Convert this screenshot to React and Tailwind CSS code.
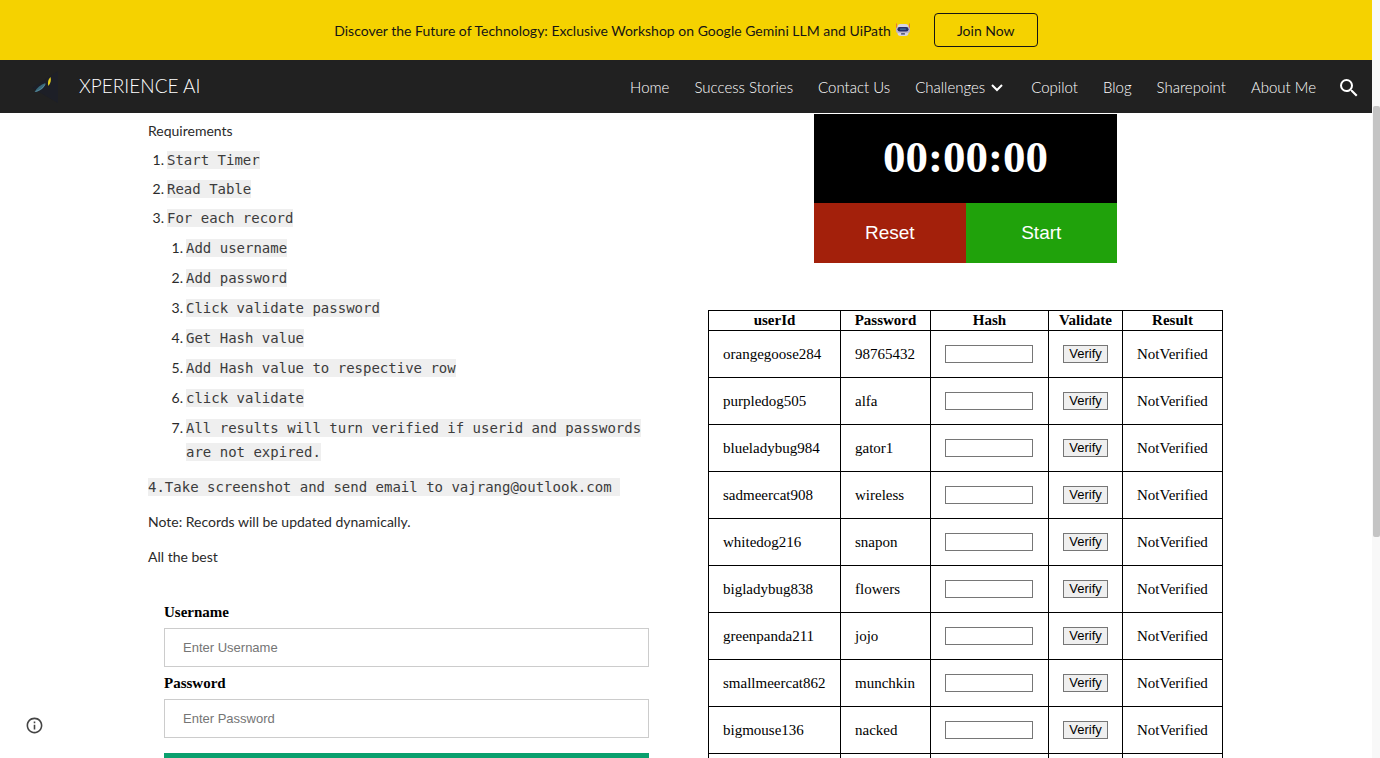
import React from "react";

const NAV_BEFORE = ["Home", "Success Stories", "Contact Us"];
const NAV_AFTER = ["Copilot", "Blog", "Sharepoint", "About Me"];

const RECORD_STEPS = [
  "Add username",
  "Add password",
  "Click validate password",
  "Get Hash value",
  "Add Hash value to respective row",
  "click validate",
  "All results will turn verified if userid and passwords are not expired.",
];

const RECORDS = [
  ["orangegoose284", "98765432"],
  ["purpledog505", "alfa"],
  ["blueladybug984", "gator1"],
  ["sadmeercat908", "wireless"],
  ["whitedog216", "snapon"],
  ["bigladybug838", "flowers"],
  ["greenpanda211", "jojo"],
  ["smallmeercat862", "munchkin"],
  ["bigmouse136", "nacked"],
];

const COLUMNS = ["userId", "Password", "Hash", "Validate", "Result"];

function RobotIcon() {
  return (
    <svg viewBox="0 0 14 14" className="h-3.5 w-3.5 shrink-0" aria-hidden="true">
      <path d="M0.5 0.5V5M13.5 0.5V5" stroke="#e8743b" strokeWidth="1" />
      <rect x="1.5" y="1" width="11" height="12" rx="3" fill="#d6d3e4" />
      <rect x="0" y="4" width="14" height="6" rx="2" fill="#bdb5cb" />
      <rect x="1.5" y="4" width="11" height="4.500" rx="2.2" fill="#27306b" />
      <rect x="4" y="5.600" width="6" height="1.200" rx="0.6" fill="#3f6f9e" />
      <rect x="5" y="10.300" width="4" height="1.300" rx="0.5" fill="#333a5c" />
    </svg>
  );
}

function LogoIcon() {
  return (
    <svg viewBox="0 0 30 34" className="h-[34px] w-[30px] shrink-0" aria-hidden="true">
      <path d="M0 18L26 1V33Z" fill="#1d1f27" />
      <path d="M2.500 22C5 17.500 8.500 15 13.500 13C13 17.500 8.500 21.500 2.500 22Z" fill="#38697b" />
      <path d="M3.500 21.500C7 20.500 10.500 18.500 13 14.500" stroke="#5f8fa0" strokeWidth="0.8" fill="none" />
      <path d="M16.200 16C15.600 12 16 9.500 18.500 7C19.400 10 18.700 13.500 16.200 16Z" fill="#e6cf1c" />
    </svg>
  );
}

function Code({ children }) {
  return (
    <code className="bg-[#efefef] py-px font-['DejaVu_Sans_Mono',monospace] text-[14px] leading-4 text-[#3c3c3c]">
      {children}
    </code>
  );
}

function Step({ number, className, children }) {
  return (
    <li className={"flex gap-[3px] " + className}>
      <span className="w-4 shrink-0 whitespace-nowrap text-right">{number}.</span>
      <div className="min-w-0 flex-1">{children}</div>
    </li>
  );
}

function Banner() {
  return (
    <div className="flex h-[60px] shrink-0 items-center justify-center gap-6 bg-[#f5d200] text-[14px] text-[#151515]">
      <p className="flex items-center gap-[5px]">
        Discover the Future of Technology: Exclusive Workshop on Google Gemini LLM and UiPath
        <RobotIcon />
      </p>
      <button type="button" className="h-[34px] w-[104px] rounded-[4px] border border-[#151515] text-[14px]">
        Join Now
      </button>
    </div>
  );
}

function Header() {
  return (
    <header className="flex h-[53px] shrink-0 items-center justify-between bg-[#212121] pl-8 pr-[11px] text-white">
      <a href="#top" className="flex items-center gap-[17px] text-[19px] font-light">
        <LogoIcon />
        XPERIENCE AI
      </a>
      <nav className="flex items-center gap-[25px] whitespace-nowrap pt-[2px] text-[15px] font-light">
        {NAV_BEFORE.map((label) => (
          <a key={label} href="#top">{label}</a>
        ))}
        <a href="#top" className="flex items-center gap-1.5 pr-[3px]">
          Challenges
          <svg viewBox="0 0 12 8" className="h-2 w-3" fill="none" stroke="currentColor" strokeWidth="2" aria-hidden="true">
            <path d="M1 1L6 6L11 1" />
          </svg>
        </a>
        {NAV_AFTER.map((label) => (
          <a key={label} href="#top">{label}</a>
        ))}
        <button type="button" aria-label="Search" className="-ml-1">
          <svg viewBox="0 0 24 24" className="h-6 w-6" fill="currentColor" aria-hidden="true">
            <path d="M15.500 14h-.79l-.28-.27A6.471 6.471 0 0 0 16 9.500 6.500 6.500 0 1 0 9.500 16c1.610 0 3.090-.59 4.230-1.570l.27.28v.79l5 4.990L20.490 19l-4.990-5zm-6 0C7.010 14 5 11.990 5 9.500S7.010 5 9.500 5 14 7.010 14 9.500 11.990 14 9.500 14z" />
          </svg>
        </button>
      </nav>
    </header>
  );
}

function Field({ id, label, type, placeholder }) {
  return (
    <div className="flex flex-col gap-[7px]">
      <label htmlFor={id} className="text-[15px] font-bold leading-[18px] text-black">{label}</label>
      <input
        id={id}
        type={type}
        placeholder={placeholder}
        className="h-[39px] w-full border border-[#ccc] px-[18px] font-['Liberation_Sans',sans-serif] text-[13px] placeholder:text-[#757575]"
      />
    </div>
  );
}

function Instructions() {
  return (
    <section className="pt-1.5 text-[14px] leading-6 text-[#2a2a2a]">
      <p>Requirements</p>
      <ol>
        <Step number={1} className="mt-[5px]"><Code>Start Timer</Code></Step>
        <Step number={2} className="mt-[5px]"><Code>Read Table</Code></Step>
        <Step number={3} className="mt-[5px]">
          <Code>For each record</Code>
          <ol>
            {RECORD_STEPS.map((text, i) => (
              <Step key={text} number={i + 1} className="mt-1.5"><Code>{text}</Code></Step>
            ))}
          </ol>
        </Step>
      </ol>
      <p className="mt-[11px] whitespace-pre-wrap"><Code>{"4.Take screenshot and send email to vajrang@outlook.com "}</Code></p>
      <p className="mt-[11px]">Note: Records will be updated dynamically.</p>
      <p className="mt-[11px]">All the best</p>
      <form className="mt-[34px] flex flex-col gap-[7px] px-4 font-['Liberation_Serif',serif]">
        <Field id="username" label="Username" type="text" placeholder="Enter Username" />
        <Field id="password" label="Password" type="password" placeholder="Enter Password" />
        <button type="button" aria-label="Validate password" className="mt-2 h-12 bg-[#0aa06e]" />
      </form>
    </section>
  );
}

function Timer() {
  return (
    <div className="mx-auto w-[303px] max-w-full">
      <div className="flex h-[89px] items-center justify-center bg-black pb-0.5 font-['Liberation_Serif',serif] text-[45px] font-bold text-white">
        00:00:00
      </div>
      <div className="grid h-[60px] grid-cols-2 font-['Liberation_Sans',sans-serif] text-[19px] text-white">
        <button type="button" className="bg-[#a3200b]">Reset</button>
        <button type="button" className="bg-[#20a20b]">Start</button>
      </div>
    </div>
  );
}

function RecordsTable() {
  return (
    <table className="mx-auto mt-[47px] w-[515px] table-fixed border-collapse font-['Liberation_Serif',serif] text-[15px] leading-4 text-black">
      <colgroup>
        <col className="w-[132px]" />
        <col className="w-[90px]" />
        <col className="w-[118px]" />
        <col className="w-[74px]" />
        <col className="w-[100px]" />
      </colgroup>
      <thead>
        <tr className="h-5">
          {COLUMNS.map((h) => (
            <th key={h} className="border border-black px-0 pb-0.5 pt-0">{h}</th>
          ))}
        </tr>
      </thead>
      <tbody>
        {RECORDS.map(([user, password]) => (
          <tr key={user} className="h-[47px]">
            <td className="border border-black px-3.5 py-0">{user}</td>
            <td className="border border-black px-3.5 py-0">{password}</td>
            <td className="border border-black px-3.5 py-0">
              <input type="text" aria-label={"Hash " + user} className="block h-[18px] w-[88px] border border-[#767676] px-0.5 text-[13px]" />
            </td>
            <td className="border border-black px-3.5 py-0">
              <button type="button" className="block h-[18px] w-[45px] border border-[#767676] bg-[#efefef] font-['Liberation_Sans',sans-serif] text-[13px] leading-4">
                Verify
              </button>
            </td>
            <td className="border border-black px-3.5 py-0">NotVerified</td>
          </tr>
        ))}
        <tr className="h-[47px]">
          {COLUMNS.map((h) => (
            <td key={h} className="border border-black" />
          ))}
        </tr>
      </tbody>
    </table>
  );
}

export default function App() {
  return (
    <div className="relative flex h-screen overflow-hidden bg-white font-['Lato',sans-serif]">
      <div className="flex min-w-0 flex-1 flex-col">
        <Banner />
        <Header />
        <main className="min-h-0 flex-1 overflow-hidden">
          <div className="mx-auto grid max-w-[1076px] grid-cols-2 gap-[42px]">
            <Instructions />
            <section className="pt-px">
              <Timer />
              <RecordsTable />
            </section>
          </div>
        </main>
      </div>
      <div className="w-2 shrink-0 bg-[#f8f8f8] pt-[106px]">
        <div className="ml-px h-[431px] rounded-[2px] bg-[#c4c4c4]" />
      </div>
      <button type="button" aria-label="Site information" className="absolute bottom-[23px] left-[25px] text-[#444]">
        <svg viewBox="0 0 24 24" className="h-[19px] w-[19px]" fill="currentColor" aria-hidden="true">
          <path d="M11 7h2v2h-2zm0 4h2v6h-2zm1-9C6.480 2 2 6.480 2 12s4.480 10 10 10 10-4.480 10-10S17.520 2 12 2zm0 18c-4.410 0-8-3.590-8-8s3.590-8 8-8 8 3.590 8 8-3.590 8-8 8z" />
        </svg>
      </button>
    </div>
  );
}
